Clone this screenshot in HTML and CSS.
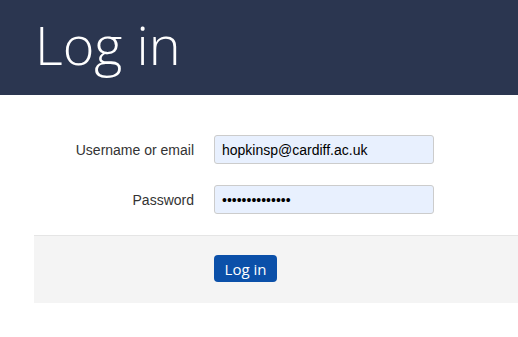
FILE: index.html
```html
<!DOCTYPE html>
<html lang="en">
<head>
    <meta charset="UTF-8">
    <meta name="viewport" content="width=device-width, initial-scale=1.0">
    <title>Log in</title>
    <link rel="stylesheet" href="styles.css">
</head>
<body>
    <header class="banner">
        <h1>Log in</h1>
    </header>

    <form class="login-form">
        <div class="field-row">
            <label for="username">Username or email</label>
            <input type="text" id="username" value="hopkinsp@cardiff.ac.uk">
        </div>
        <div class="field-row">
            <label for="password">Password</label>
            <input type="password" id="password" value="abcdefghijklmn">
        </div>
        <div class="form-actions">
            <button type="submit">Log in</button>
        </div>
    </form>
</body>
</html>
```

FILE: styles.css
```css
body {
    margin: 0;
    font-family: "Liberation Sans", Arial, sans-serif;
    font-size: 14px;
    color: #333;
    background: #fff;
}
.banner {
    background-color: #2b3650;
    height: 95px;
    padding: 0 0 7px 35px;
    box-sizing: border-box;
}
.banner h1 {
    margin: 0;
    font-family: "Open Sans", sans-serif;
    font-weight: 300;
    font-size: 54px;
    line-height: 88px;
    color: #fff;
}
.login-form {
    margin: 40px 0 0 34px;
}
.field-row {
    display: flex;
    align-items: center;
    margin-bottom: 21px;
}
.field-row label {
    width: 160px;
    text-align: right;
    padding-right: 20px;
    color: #333;
}
.field-row input {
    width: 220px;
    height: 29px;
    box-sizing: border-box;
    padding: 0 7px;
    border: 1px solid #ccc;
    border-radius: 3px;
    background-color: #e8f0fe;
    font-family: "Liberation Sans", Arial, sans-serif;
    font-size: 14px;
    color: #000;
}
.form-actions {
    background-color: #f4f4f4;
    border-top: 1px solid #e5e5e5;
    padding: 19px 0 21px 180px;
}
.form-actions button {
    background-color: #0b50a9;
    color: #fff;
    border: none;
    border-radius: 4px;
    width: 63px;
    height: 27px;
    padding: 0;
    font-family: "Open Sans", sans-serif;
    font-size: 15px;
    vertical-align: top;
}
```
